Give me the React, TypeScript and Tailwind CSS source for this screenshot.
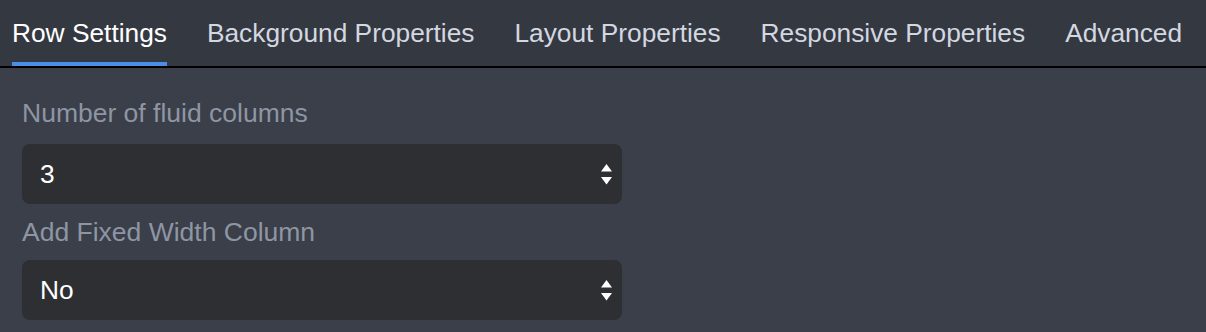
const tabs = ['Row Settings', 'Background Properties', 'Layout Properties', 'Responsive Properties', 'Advanced'];

const Arrows = () => (
  <svg width="11" height="21" viewBox="0 0 11 21" className="shrink-0">
    <polygon points="5.5,0 11,7.5 0,7.5" fill="#ffffff" />
    <polygon points="0,13 11,13 5.5,20.5" fill="#ffffff" />
  </svg>
);

const FakeSelect = ({ value }: { value: string }) => (
  <div className="flex h-[60px] w-[600px] items-center justify-between rounded-[8px] bg-[#2d2f33] pl-[18px] pr-[10px] text-[26.3px] leading-[30px] text-white">
    <span>{value}</span>
    <Arrows />
  </div>
);

export default function App() {
  return (
    <div className="h-[332px] w-[1206px] overflow-hidden bg-[#3a3f49] font-['Liberation_Sans',Arial,sans-serif]">
      {/* tab bar */}
      <div className="flex h-[68px] gap-[40px] border-b-2 border-black bg-[#343841] pl-[12px]">
        {tabs.map((t, i) => (
          <div
            key={t}
            className={`h-[66px] whitespace-nowrap border-b-4 pt-[18px] text-[26.3px] leading-[30px] ${
              i === 0 ? 'border-[#4a8fe7] text-white' : 'border-transparent text-[#d3d7e0]'
            }`}
          >
            {t}
          </div>
        ))}
      </div>

      {/* row settings form */}
      <div className="px-[22px] pt-[30px]">
        <div className="mb-[16px] text-[26.5px] leading-[30px] text-[#8e95a3]">Number of fluid columns</div>
        <FakeSelect value="3" />
        <div className="mb-[13px] mt-[13px] text-[26.5px] leading-[30px] text-[#8e95a3]">Add Fixed Width Column</div>
        <FakeSelect value="No" />
      </div>
    </div>
  );
}
